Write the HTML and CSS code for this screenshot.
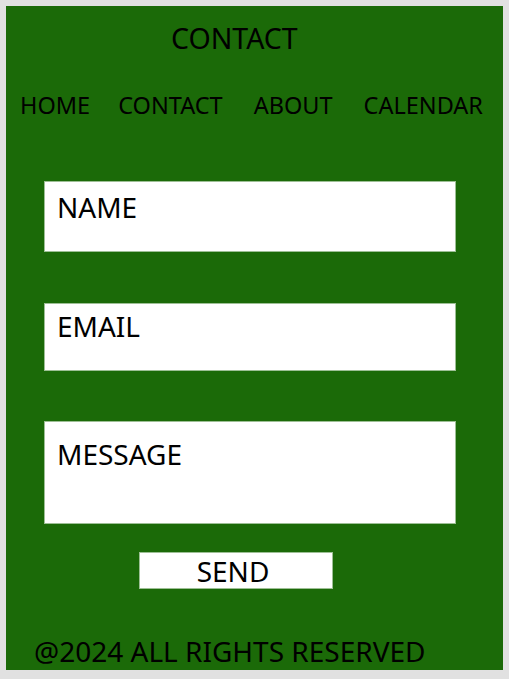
FILE: index.html
```html
<!DOCTYPE html>
<html lang="en">
<head>
<meta charset="utf-8">
<title>Contact</title>
<link rel="stylesheet" href="styles.css">
</head>
<body>
<div class="page">
  <h1 class="title">CONTACT</h1>
  <nav class="nav">
    <a class="nav-link" href="#">HOME</a>
    <a class="nav-link" href="#">CONTACT</a>
    <a class="nav-link" href="#">ABOUT</a>
    <a class="nav-link" href="#">CALENDAR</a>
  </nav>
  <form class="form">
    <div class="field field-name">NAME</div>
    <div class="field field-email">EMAIL</div>
    <div class="field field-message">MESSAGE</div>
    <div class="send-row"><button type="button" class="send">SEND</button></div>
  </form>
  <footer class="footer">@2024 ALL RIGHTS RESERVED</footer>
</div>
</body>
</html>
```

FILE: styles.css
```css
html, body {
  margin: 0;
  padding: 0;
}
body {
  background: #e1e1e1;
  padding: 6px;
  font-family: "Noto Sans", "Open Sans", sans-serif;
  color: #000;
}
.page {
  width: 497px;
  height: 664px;
  background: #1b6a08;
  box-sizing: border-box;
  overflow: hidden;
}
.title {
  margin: 0;
  padding: 18px 0 0 165px;
  font-size: 28.5px;
  line-height: 28.5px;
  font-weight: 400;
}
.nav {
  display: flex;
  gap: 31px;
  padding: 41px 0 0 14px;
}
.nav-link {
  color: #000;
  text-decoration: none;
  font-size: 23.5px;
  line-height: 23.5px;
}
.nav-link:nth-child(2) {
  margin-left: -3px;
}
.form {
  display: flex;
  flex-direction: column;
  padding: 64px 0 0 38px;
}
.field {
  width: 412px;
  box-sizing: border-box;
  background: #fff;
  border: 1px solid #9dbf95;
  font-size: 28px;
  line-height: 28px;
  padding: 11px 12px 0;
}
.field-name { height: 71px; }
.field-email { height: 68px; margin-top: 51px; padding-top: 8px; }
.field-message { height: 103px; margin-top: 50px; padding-top: 18px; }
.send-row {
  display: flex;
  padding: 28px 0 0 95px;
}
.send {
  width: 194px;
  height: 37px;
  box-sizing: border-box;
  background: #fff;
  border: 1px solid #9dbf95;
  font-family: inherit;
  font-size: 28px;
  line-height: 28px;
  padding: 0 6px 0 0;
  color: #000;
}
.footer {
  padding: 48px 0 0 28px;
  font-size: 28px;
  line-height: 28px;
}
```
